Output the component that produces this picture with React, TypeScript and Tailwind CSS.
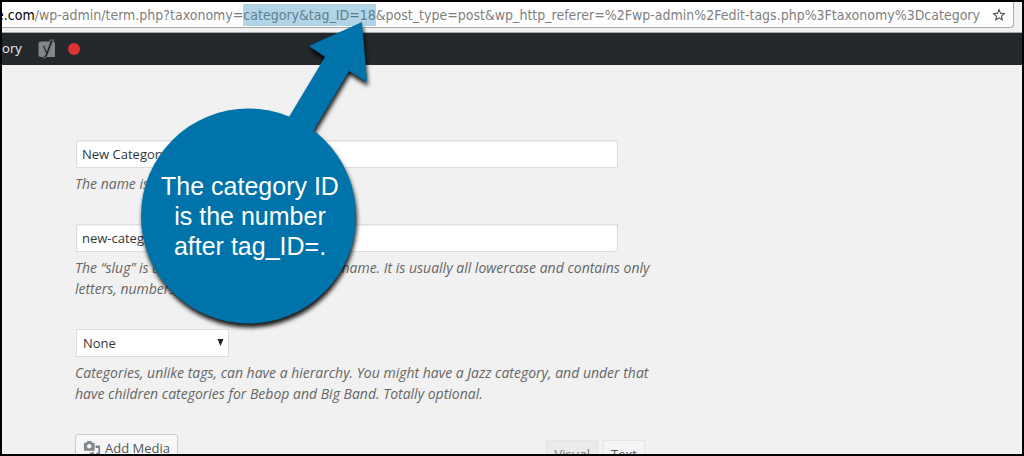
import type { ReactNode } from 'react';

interface FieldProps {
  id: string;
  description: ReactNode;
  children: ReactNode;
}

function Field({ id, description, children }: FieldProps) {
  return (
    <div>
      {children}
      <p id={`${id}-description`} className="mt-[5px] text-sm leading-[21px] whitespace-nowrap italic text-[#666]">
        {description}
      </p>
    </div>
  );
}

function AddressBar() {
  return (
    <div className="bg-[#f1f1f1] pr-2 pb-1 border-b border-[#a9a9a9]">
      <div className="flex h-[26px] items-center justify-between rounded-br border-r border-b border-[#a9a9a9] bg-white pr-1.5">
        <div
          role="textbox"
          aria-label="Address"
          className="-ml-1.5 whitespace-nowrap font-['DejaVu_Sans_Condensed','DejaVu_Sans',sans-serif] text-sm leading-[22px] text-[#808080]"
        >
          <span className="text-black">e.com</span>
          /wp-admin/term.php?taxonomy=
          <span className="inline-block bg-[#b2d5e5] text-[#5f7f90]">category&amp;tag_ID=18</span>
          &amp;post_type=post&amp;wp_http_referer=%2Fwp-admin%2Fedit-tags.php%3Ftaxonomy%3Dcategory
        </div>
        <button type="button" aria-label="Bookmark this page" className="shrink-0">
          <svg viewBox="0 0 24 24" className="size-4 fill-[#4a4a4a]">
            <path d="M22 9.2l-7.2-.6L12 2 9.200 8.600 2 9.200l5.500 4.700L5.800 21 12 17.300 18.200 21l-1.600-7.100L22 9.200zM12 15.400l-3.800 2.300 1-4.300-3.300-2.900 4.400-.4L12 6.100l1.700 4 4.400.4-3.300 2.900 1 4.300L12 15.400z" />
          </svg>
        </button>
      </div>
    </div>
  );
}

function AdminBar() {
  return (
    <div className="flex h-8 items-center bg-[#23282d] text-[13px] text-[#eee]">
      <a href="#view" className="-ml-[7px]">
        gory
      </a>
      <a href="#seo" aria-label="SEO" className="ml-4 flex items-center gap-3">
        <svg viewBox="0 0 18 20" className="h-5 w-[18px]">
          <path d="M3 2.500h11.500A2.500 2.500 0 0 1 17 5v13H3a2.500 2.500 0 0 1-2.500-2.500V5A2.500 2.500 0 0 1 3 2.500z" fill="#82878c" />
          <path
            d="M12.500 1h3L10 15.500c-1 2.500-2 3.500-4.700 3.500v-2c1.400-.2 2.200-.9 2.200-2 0-.5-.1-.9-.3-1.400L4.500 6.500h2.200l2 5.500z"
            fill="#23282d"
            stroke="#82878c"
            strokeWidth="0.800"
          />
        </svg>
        <span className="size-3 rounded-full bg-[#dc3232]" />
      </a>
    </div>
  );
}

function MediaIcon() {
  return (
    <svg viewBox="0 0 20 20" className="size-[18px] fill-[#82878c]">
      <path d="M13 11V4c0-.55-.45-1-1-1h-1.670L9 1H5L3.670 3H2c-.55 0-1 .45-1 1v7c0 .55.45 1 1 1h10c.55 0 1-.45 1-1zM7 4.500c1.380 0 2.500 1.120 2.500 2.500S8.380 9.500 7 9.500 4.500 8.380 4.500 7 5.620 4.500 7 4.500zM14 6h5v10.500c0 1.380-1.120 2.500-2.500 2.500S14 17.880 14 16.500s1.120-2.500 2.500-2.500c.17 0 .34.020.5.050V9h-3V6zm-4 8.050V13h2v3.500c0 1.380-1.120 2.500-2.500 2.500S7 17.880 7 16.500 8.120 14 9.500 14c.17 0 .34.020.5.050z" />
    </svg>
  );
}

// Blue bubble with an arrow pointing up at the tag_ID in the address bar
function Callout() {
  return (
    <div className="pointer-events-none absolute top-[14px] left-[130px] h-[320px] w-[244px]">
      <svg viewBox="132 16 244 320" className="absolute inset-0 size-full overflow-visible">
        <g className="fill-[#0073aa] [filter:drop-shadow(1px_4px_2px_rgba(0,0,0,0.9))]">
          <circle cx="248.500" cy="216" r="107.500" />
          <path d="M362 22L309 46L325 57L286 122L309 138L349 71L367 82Z" />
        </g>
      </svg>
      <p className="absolute inset-x-0 top-[155px] pr-2 text-center font-['Liberation_Sans',Arial,sans-serif] text-[25px] leading-[30px] text-white">
        The category ID
        <br />
        is the number
        <br />
        after tag_ID=.
      </p>
    </div>
  );
}

const inputClass =
  'ml-px block h-7 w-[95%] border border-[#ddd] bg-white px-[5px] text-[13px] text-[#32373c] shadow-[inset_0_1px_2px_rgba(0,0,0,0.07)]';

export default function App() {
  return (
    <div className="relative h-screen overflow-hidden border-2 border-black bg-[#f1f1f1] font-['Open_Sans','Noto_Sans',sans-serif]">
      <AddressBar />
      <AdminBar />

      <form className="ml-[73px] flex max-w-[570px] flex-col gap-[30px] pt-[75px]">
        <Field id="name" description="The name is how it appears on your site.">
          <input id="name" aria-label="Name" defaultValue="New Category" className={inputClass} />
        </Field>

        <Field
          id="slug"
          description={
            <>
              The “slug” is the URL-friendly version of the name. It is usually all lowercase and contains only
              <br />
              letters, numbers, and hyphens.
            </>
          }
        >
          <input id="slug" aria-label="Slug" defaultValue="new-category" className={inputClass} />
        </Field>

        <Field
          id="parent"
          description={
            <>
              Categories, unlike tags, can have a hierarchy. You might have a Jazz category, and under that
              <br />
              have children categories for Bebop and Big Band. Totally optional.
            </>
          }
        >
          <div className="relative ml-px w-[153px]">
            <select
              id="parent"
              aria-label="Parent Category"
              className="block h-7 w-full appearance-none border border-[#ddd] bg-white px-[6px] pt-0.5 text-[13px] text-[#32373c]"
            >
              <option>None</option>
            </select>
            <svg viewBox="0 0 7 7" className="pointer-events-none absolute top-[10px] right-[5px] size-[7px] fill-[#222]">
              <path d="M0.500 0h6L3.500 7z" />
            </svg>
          </div>
        </Field>

        <div className="flex items-start justify-between">
          <button
            type="button"
            className="flex h-7 items-center gap-1 rounded-[3px] border border-[#ccc] bg-[#f7f7f7] px-[7px] pt-0.5 text-[13px] text-[#555]"
          >
            <MediaIcon />
            Add Media
          </button>
          <div className="mt-[6px] flex gap-[5px] text-[13px] leading-[19px] text-[#777]">
            <button type="button" className="border border-[#e5e5e5] bg-[#ebebeb] px-[7px] py-1">
              Visual
            </button>
            <button type="button" className="border border-[#e5e5e5] bg-[#f5f5f5] px-[7px] py-1 text-[#555]">
              Text
            </button>
          </div>
        </div>
      </form>

      <Callout />
    </div>
  );
}
